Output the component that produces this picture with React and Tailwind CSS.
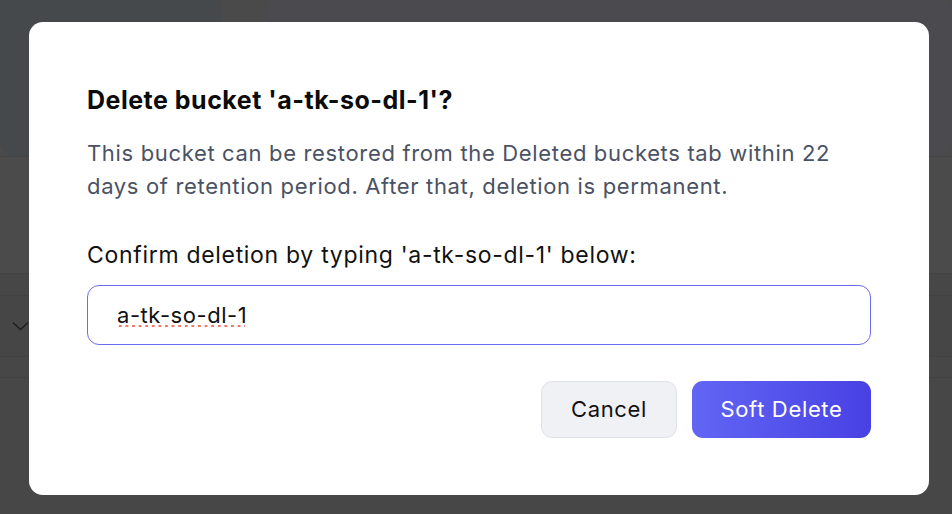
import { useState } from "react";

function BackdropPage() {
  return (
    <div className="flex h-full w-full flex-col bg-[#4a4a4a]">
      {/* top summary cards */}
      <div className="flex h-[156px] shrink-0 gap-[46px]">
        <div className="-mt-[8px] w-[222px] rounded-[16px] bg-[#45494c]" />
        <div className="-mt-[8px] flex-1 rounded-[16px] bg-[#4b4a4f]" />
      </div>

      {/* filter + bucket rows */}
      <div className="h-[117px] shrink-0 border-t border-[#444444] bg-[#4b4b4b]" />
      <div className="h-[22px] shrink-0 border-t border-[#424242] bg-[#474747]" />
      <div className="flex h-[62px] shrink-0 items-center border-y border-[#424242] bg-[#464646] pl-[12px]">
        <svg width="17" height="10" viewBox="0 0 17 10" fill="none" className="text-[#1e1e1e]">
          <path d="M1 1.5 L8.5 8.5 L16 1.5" stroke="currentColor" strokeWidth="1.4" />
        </svg>
      </div>
      <div className="h-[21px] shrink-0 border-b border-[#424242] bg-[#474747]" />
      <div className="relative flex-1 bg-[#474747]">
        <div className="absolute bottom-[-14px] left-0 right-0 text-[20px] font-medium text-[#1a1a1a]">
          <span className="absolute left-[132px]">Location</span>
          <span className="absolute left-[480px]">Last Modified</span>
          <span className="absolute left-[922px]">Access</span>
        </div>
      </div>
    </div>
  );
}

function DeleteBucketDialog({ bucket }) {
  const [value, setValue] = useState(bucket);

  return (
    <div className="w-[900px] rounded-[14px] bg-white px-[58px] pb-[57px] pt-[62px]">
      <h2 className="text-[25px] font-bold leading-[32px] tracking-[0.02em] text-[#0b0b0b]">
        Delete bucket '{bucket}'?
      </h2>
      <p className="mt-[21px] text-[22px] leading-[33px] tracking-[0.03em] text-[#4b5263]">
        This bucket can be restored from the Deleted buckets tab within 22
        days of retention period. After that, deletion is permanent.
      </p>
      <label className="mt-[36px] block text-[23px] leading-[33px] tracking-[0.03em] text-[#111111]">
        Confirm deletion by typing '{bucket}' below:
      </label>
      <div className="relative mt-[13px]">
        <input
          value={value}
          onChange={(e) => setValue(e.target.value)}
          spellCheck
          className="block h-[60px] w-full rounded-[12px] border border-[#6b6cf0] px-[29px] text-[22px] tracking-[0.025em] text-[#111111] outline-none"
        />
        {/* spell-check squiggle under the typed value */}
        <span
          aria-hidden="true"
          className="pointer-events-none absolute left-[30px] top-[39px] h-[4px] w-[128px] bg-[radial-gradient(circle,#f0766a_1.1px,transparent_1.5px)] bg-[length:6.6px_4px] bg-repeat-x"
        />
      </div>
      <div className="mt-[36px] flex justify-end gap-[15px]">
        <button
          type="button"
          className="h-[57px] w-[136px] rounded-[11px] border border-[#e1e2e9] bg-[#f0f1f5] text-[22px] tracking-[0.03em] text-[#111111]"
        >
          Cancel
        </button>
        <button
          type="button"
          className="h-[57px] w-[179px] rounded-[11px] bg-gradient-to-r from-[#6265f4] to-[#4840e3] text-[22px] tracking-[0.03em] text-white"
        >
          Soft Delete
        </button>
      </div>
    </div>
  );
}

export default function App() {
  return (
    <div className="relative h-[514px] w-[952px] overflow-hidden font-['Inter',sans-serif]">
      <BackdropPage />
      <div className="absolute inset-0 pl-[29px] pt-[22px]">
        <DeleteBucketDialog bucket="a-tk-so-dl-1" />
      </div>
    </div>
  );
}
